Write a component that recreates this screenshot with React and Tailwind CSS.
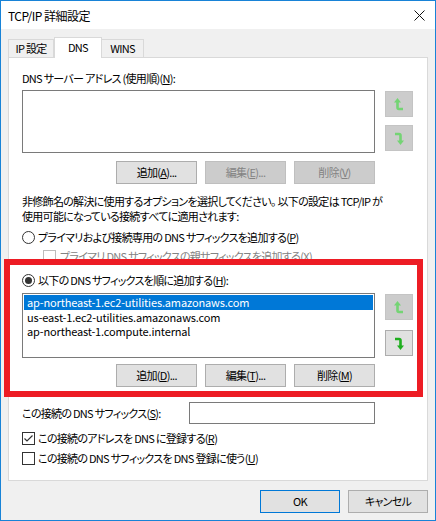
import React from 'react';

const Mn = ({ children }) => <span className="underline underline-offset-[1px]">{children}</span>;

const UpIcon = ({ color }) => (
  <svg width="12" height="15" viewBox="0 0 12 15">
    <path d="M1 5.5 L4.5 1 L8 5.5 Z" fill={color} />
    <path d="M4.5 4 V10.5 Q4.5 12 6 12 H10" stroke={color} strokeWidth="2.6" fill="none" />
  </svg>
);

const DownIcon = ({ color }) => (
  <svg width="12" height="15" viewBox="0 0 12 15">
    <path d="M2 3 H6 Q7.5 3 7.5 4.5 V11" stroke={color} strokeWidth="2.6" fill="none" />
    <path d="M4 9.5 L7.5 14 L11 9.5 Z" fill={color} />
  </svg>
);

const ArrowButton = ({ dir, enabled }) => {
  const color = enabled ? '#1fae1f' : '#74d474';
  return (
    <div
      className={
        'w-[28px] h-[26px] flex items-center justify-center border ' +
        (enabled ? 'bg-[#e1e1e1] border-[#adadad]' : 'bg-[#cccccc] border-[#c4c4c4]')
      }
    >
      {dir === 'up' ? <UpIcon color={color} /> : <DownIcon color={color} />}
    </div>
  );
};

const Button = ({ children, disabled, w = 'w-[81px]', primary }) => (
  <div
    className={
      'h-[23px] flex items-center justify-center border ' +
      w +
      ' ' +
      (disabled
        ? 'bg-[#cccccc] border-[#bfbfbf] text-[#838383]'
        : primary
        ? 'bg-[#e1e1e1] border-[#0078d7]'
        : 'bg-[#e1e1e1] border-[#adadad]')
    }
  >
    {children}
  </div>
);

const Radio = ({ checked }) => (
  <div className="w-[13px] h-[13px] rounded-full border border-[#333333] bg-white flex items-center justify-center shrink-0">
    {checked && <div className="w-[7px] h-[7px] rounded-full bg-[#333333]" />}
  </div>
);

const Checkbox = ({ checked, disabled }) => (
  <div
    className={
      'w-[13px] h-[13px] border bg-white flex items-center justify-center shrink-0 ' +
      (disabled ? 'border-[#bcbcbc]' : 'border-[#333333]')
    }
  >
    {checked && (
      <svg width="11" height="11" viewBox="0 0 11 11">
        <path d="M1.5 5.5 L4 8 L9.5 2.5" stroke="#333333" strokeWidth="1.2" fill="none" />
      </svg>
    )}
  </div>
);

const suffixes = [
  'ap-northeast-1.ec2-utilities.amazonaws.com',
  'us-east-1.ec2-utilities.amazonaws.com',
  'ap-northeast-1.compute.internal',
];

export default function App() {
  return (
    <div className="relative w-[436px] h-[521px] border border-[#1883d7] bg-[#f0f0f0] flex flex-col text-[11px] leading-[15px] tracking-[-0.7px] text-black font-['Noto_Sans_CJK_JP',sans-serif] [font-feature-settings:'palt']">
      {/* title bar */}
      <div className="h-[28px] bg-white flex items-center justify-between pl-[7px] pr-[10px] shrink-0">
        <span className="text-[12px] tracking-[-0.5px]">TCP/IP 詳細設定</span>
        <svg width="11" height="11" viewBox="0 0 11 11">
          <path d="M0.5 0.5 L10.5 10.5 M10.5 0.5 L0.5 10.5" stroke="#111" strokeWidth="1" />
        </svg>
      </div>

      {/* tabs */}
      <div className="flex items-end h-[20px] mt-[8px] ml-[7px]">
        <div className="w-[46px] h-[18px] border border-b-0 border-[#d9d9d9] bg-[#f0f0f0] flex items-center justify-center">IP 設定</div>
        <div className="w-[48px] h-[21px] border border-b-0 border-[#d9d9d9] bg-white -mb-px relative z-10 flex items-start justify-center pt-[2px]">DNS</div>
        <div className="w-[42px] h-[18px] border border-b-0 border-l-0 border-[#d9d9d9] bg-[#f0f0f0] flex items-center justify-center">WINS</div>
      </div>

      {/* tab panel */}
      <div className="ml-[7px] w-[420px] h-[424px] border border-[#d9d9d9] bg-white pl-[13px] flex flex-col">
        <div className="mt-[13px] h-[14px] leading-[14px]">
          DNS サーバー アドレス (使用順)(<Mn>N</Mn>):
        </div>

        <div className="mt-[5px] flex">
          <div className="w-[353px] h-[63px] border border-[#7a7a7a] bg-white" />
          <div className="ml-[10px] mt-[1px] flex flex-col gap-[8px]">
            <ArrowButton dir="up" />
            <ArrowButton dir="down" />
          </div>
        </div>

        <div className="mt-[8px] w-[353px] flex justify-end gap-[8px]">
          <Button>追加(<Mn>A</Mn>)...</Button>
          <Button disabled>編集(<Mn>E</Mn>)...</Button>
          <Button disabled>削除(<Mn>V</Mn>)</Button>
        </div>

        <div className="mt-[10px] whitespace-nowrap">
          <div>非修飾名の解決に使用するオプションを選択してください。 以下の設定は TCP/IP が</div>
          <div>使用可能になっている接続すべてに適用されます:</div>
        </div>

        <div className="mt-[5px] h-[16px] flex items-center gap-[3px]">
          <Radio />
          <span>プライマリおよび接続専用の DNS サフィックスを追加する(<Mn>P</Mn>)</span>
        </div>

        <div className="mt-[3px] h-[16px] flex items-center gap-[4px] pl-[21px] text-[#838383]">
          <Checkbox disabled />
          <span>プライマリ DNS サフィックスの親サフィックスを追加する(<Mn>X</Mn>)</span>
        </div>

        <div className="mt-[8px] h-[16px] flex items-center gap-[3px]">
          <Radio checked />
          <span>以下の DNS サフィックスを順に追加する(<Mn>H</Mn>):</span>
        </div>

        <div className="mt-[5px] flex">
          <div className="w-[353px] h-[65px] border border-[#7a7a7a] bg-white p-px tracking-[-0.15px]">
            {suffixes.map((s, i) => (
              <div
                key={s}
                className={'h-[14.5px] leading-[14px] pl-[3px] ' + (i === 0 ? 'bg-[#0078d7] text-white' : '')}
              >
                {s}
              </div>
            ))}
          </div>
          <div className="ml-[10px] mt-[1px] flex flex-col gap-[10px]">
            <ArrowButton dir="up" />
            <ArrowButton dir="down" enabled />
          </div>
        </div>

        <div className="mt-[6px] w-[353px] flex justify-end gap-[8px]">
          <Button>追加(<Mn>D</Mn>)...</Button>
          <Button>編集(<Mn>T</Mn>)...</Button>
          <Button>削除(<Mn>M</Mn>)</Button>
        </div>

        <div className="mt-[15px] flex items-center">
          <span className="w-[167px]">この接続の DNS サフィックス(<Mn>S</Mn>):</span>
          <div className="w-[186px] h-[22px] border border-[#7a7a7a] bg-white" />
        </div>

        <div className="mt-[6px] h-[16px] flex items-center gap-[3px]">
          <Checkbox checked />
          <span>この接続のアドレスを DNS に登録する(<Mn>R</Mn>)</span>
        </div>

        <div className="mt-[4px] h-[16px] flex items-center gap-[3px]">
          <Checkbox />
          <span>この接続の DNS サフィックスを DNS 登録に使う(<Mn>U</Mn>)</span>
        </div>
      </div>

      {/* dialog buttons */}
      <div className="mt-[9px] pr-[7px] flex justify-end gap-[8px]">
        <Button w="w-[80px]" primary>OK</Button>
        <Button w="w-[80px]">キャンセル</Button>
      </div>

      {/* red annotation frame */}
      <div className="absolute left-[3px] top-[258px] w-[419px] h-[138px] border-[6px] border-[#ed1c24] pointer-events-none" />
    </div>
  );
}
